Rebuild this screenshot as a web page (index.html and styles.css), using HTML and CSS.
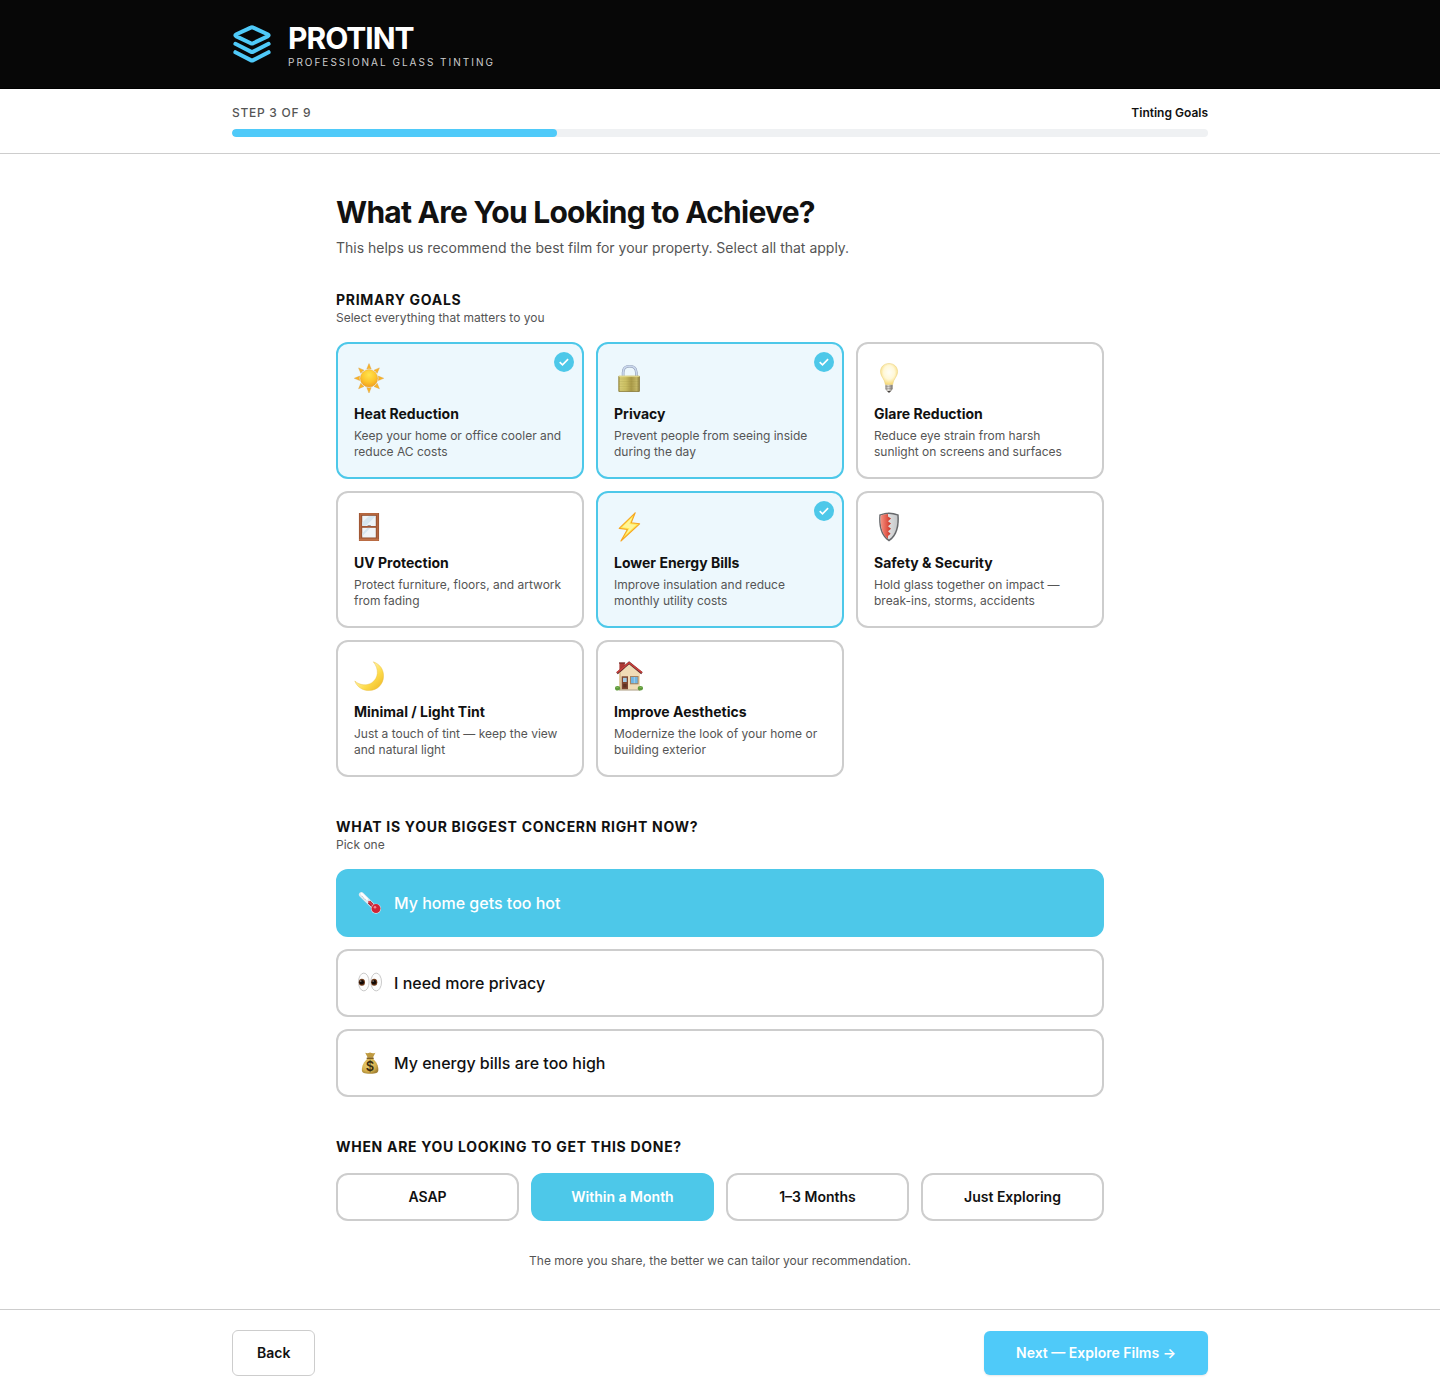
FILE: index.html
```html
<!DOCTYPE html>
<html lang="en">
<head>
    <meta charset="UTF-8">
    <meta name="viewport" content="width=device-width, initial-scale=1.0">
    <title>ProTint - Tinting Goals</title>
    <link rel="stylesheet" href="styles.css">
</head>
<body>
    <header class="site-header">
        <div class="container brand">
            <svg class="brand-icon" viewBox="0 0 40 40" fill="none" stroke="#4fcaf9" stroke-width="4" stroke-linecap="round" stroke-linejoin="round" aria-hidden="true">
                <path d="M18.8 3.6Q20 3 21.2 3.6L35.6 10.2Q37.8 11.3 35.6 12.4L21.2 19.2Q20 19.8 18.8 19.2L4.4 12.4Q2.2 11.3 4.4 10.2Z"/>
                <path d="M3.4 19.8 18.8 27.6Q20 28.2 21.2 27.6L36.6 19.8"/>
                <path d="M3.4 28.2 18.8 36.1Q20 36.7 21.2 36.1L36.6 28.2"/>
            </svg>
            <div>
                <div class="brand-name">PROTINT</div>
                <div class="brand-tag">PROFESSIONAL GLASS TINTING</div>
            </div>
        </div>
    </header>

    <div class="progress">
        <div class="container">
            <div class="progress-labels">
                <span class="progress-step">STEP 3 OF 9</span>
                <span class="progress-title">Tinting Goals</span>
            </div>
            <div class="progress-track">
                <div class="progress-fill" style="width: 33.33%"></div>
            </div>
        </div>
    </div>

    <form>
        <main class="content">
            <h1>What Are You Looking to Achieve?</h1>
            <p class="intro">This helps us recommend the best film for your property. Select all that apply.</p>

            <section class="section">
                <h2>PRIMARY GOALS</h2>
                <p class="hint">Select everything that matters to you</p>
                <div class="goals">
                    <label class="goal">
                        <input type="checkbox" name="goal" value="heat" checked>
                        <svg class="badge" viewBox="0 0 20 20" aria-hidden="true"><circle cx="10" cy="10" r="10"/><path d="M5.7 10.1 8.5 12.8 14.1 7.1"/></svg>
                        <svg class="goal-icon" viewBox="0 0 30 30" aria-hidden="true">
                            <defs>
                                <radialGradient id="sun" cx=".5" cy=".3" r=".75"><stop offset="0" stop-color="#ffe34d"/><stop offset=".55" stop-color="#fdc52c"/><stop offset="1" stop-color="#ee9a1e"/></radialGradient>
                                <path id="ray" d="M15 .6 17.2 6Q15 5.2 12.8 6Z"/>
                            </defs>
                            <g fill="#fbb524" stroke="#d99a3c" stroke-width=".4">
                                <use href="#ray"/>
                                <use href="#ray" transform="rotate(45 15 15.3)"/>
                                <use href="#ray" transform="rotate(90 15 15.3)"/>
                                <use href="#ray" transform="rotate(135 15 15.3)"/>
                                <use href="#ray" transform="rotate(180 15 15.3)"/>
                                <use href="#ray" transform="rotate(225 15 15.3)"/>
                                <use href="#ray" transform="rotate(270 15 15.3)"/>
                                <use href="#ray" transform="rotate(315 15 15.3)"/>
                            </g>
                            <circle cx="15" cy="15.3" r="8.7" fill="url(#sun)" stroke="#e9a032" stroke-width=".4"/>
                        </svg>
                        <span class="goal-title">Heat Reduction</span>
                        <span class="goal-text">Keep your home or office cooler and reduce AC costs</span>
                    </label>
                    <label class="goal">
                        <input type="checkbox" name="goal" value="privacy" checked>
                        <svg class="badge" viewBox="0 0 20 20" aria-hidden="true"><circle cx="10" cy="10" r="10"/><path d="M5.7 10.1 8.5 12.8 14.1 7.1"/></svg>
                        <svg class="goal-icon" viewBox="0 0 30 30" aria-hidden="true">
                            <defs>
                                <linearGradient id="brass" x2="1" y2="0"><stop offset="0" stop-color="#8f8038"/><stop offset=".1" stop-color="#d5cb73"/><stop offset=".35" stop-color="#cbbf62"/><stop offset=".6" stop-color="#aa9a48"/><stop offset=".85" stop-color="#c5b866"/><stop offset="1" stop-color="#85773a"/></linearGradient>
                            </defs>
                            <path d="M9.1 14V9.6C9.1 5.3 11.6 3.2 15.6 3.2S22.3 5.3 22.3 9.6V14" fill="none" stroke="#8593ab" stroke-width="2.6"/>
                            <path d="M9.1 14V9.6C9.1 5.3 11.6 3.2 15.6 3.2S22.3 5.3 22.3 9.6V14" fill="none" stroke="#c9d6ec" stroke-width="1.7"/>
                            <rect x="4.3" y="12.8" width="21.6" height="16" rx="1" fill="url(#brass)"/>
                            <path d="M4.8 13.3H25.4" stroke="#e3da91"/>
                            <path d="M5 16H25M5 18.5H25M5 21H25M5 23.5H25M5 26H25" stroke="#8d8039" stroke-width=".15"/>
                            <path d="M4.8 28.4H25.4" stroke="#85763a" stroke-width=".8"/>
                        </svg>
                        <span class="goal-title">Privacy</span>
                        <span class="goal-text">Prevent people from seeing inside during the day</span>
                    </label>
                    <label class="goal">
                        <input type="checkbox" name="goal" value="glare">
                        <svg class="badge" viewBox="0 0 20 20" aria-hidden="true"><circle cx="10" cy="10" r="10"/><path d="M5.7 10.1 8.5 12.8 14.1 7.1"/></svg>
                        <svg class="goal-icon" viewBox="0 0 30 30" aria-hidden="true">
                            <defs>
                                <radialGradient id="glass" cx=".5" cy=".42" r=".58"><stop offset="0" stop-color="#fffef6"/><stop offset=".55" stop-color="#fff8d8"/><stop offset="1" stop-color="#f7d974"/></radialGradient>
                                <linearGradient id="screw" x2="1" y2="0"><stop offset="0" stop-color="#8a8580"/><stop offset=".4" stop-color="#e2dfda"/><stop offset="1" stop-color="#77726d"/></linearGradient>
                            </defs>
                            <path d="M11.4 21.5H18.6V26L16.5 29H13.5L11.4 26Z" fill="url(#screw)"/>
                            <path d="M11.5 23.7 18.5 23M11.5 25.9 18.5 25.2" stroke="#74706c" stroke-width=".4"/>
                            <path d="M13.4 28H16.6L15.8 29.5H14.2Z" fill="#45413e"/>
                            <path d="M15 .5C9.8 .5 6.5 4.1 6.5 8.7 6.5 13.8 10.7 15.6 11.3 21.6H18.7C19.3 15.6 23.6 13.8 23.6 8.7 23.6 4.1 20.2 .5 15 .5Z" fill="url(#glass)" stroke="#e9cf79" stroke-width=".5"/>
                        </svg>
                        <span class="goal-title">Glare Reduction</span>
                        <span class="goal-text">Reduce eye strain from harsh sunlight on screens and surfaces</span>
                    </label>
                    <label class="goal">
                        <input type="checkbox" name="goal" value="uv">
                        <svg class="badge" viewBox="0 0 20 20" aria-hidden="true"><circle cx="10" cy="10" r="10"/><path d="M5.7 10.1 8.5 12.8 14.1 7.1"/></svg>
                        <svg class="goal-icon" viewBox="0 0 30 30" aria-hidden="true">
                            <rect x="5" y="1" width="20" height="28" fill="#b5673f"/>
                            <path d="M5.4 1V29M24.6 1V29" stroke="#8f4c2d" stroke-width=".6"/>
                            <path d="M7.4 3H22.6V26.2H7.4Z" fill="#8b4a2c"/>
                            <rect x="8.2" y="3.8" width="13.6" height="10.2" fill="#eef4f8"/>
                            <rect x="8.2" y="15.6" width="13.6" height="9.9" fill="#f1f5f8"/>
                            <path d="M8.2 13.8V10.5L15 4H21.8L12 13.8ZM8.2 21.5 13.5 15.8H16.5L8.2 24.2Z" fill="#d5e6f0"/>
                            <path d="M7 14.8H23" stroke="#a75a37" stroke-width="1.4"/>
                            <path d="M13.6 13.5H16.8" stroke="#8b8f92" stroke-width=".9"/>
                            <path d="M5 27.8H25" stroke="#c77a50" stroke-width="1"/>
                        </svg>
                        <span class="goal-title">UV Protection</span>
                        <span class="goal-text">Protect furniture, floors, and artwork from fading</span>
                    </label>
                    <label class="goal">
                        <input type="checkbox" name="goal" value="energy" checked>
                        <svg class="badge" viewBox="0 0 20 20" aria-hidden="true"><circle cx="10" cy="10" r="10"/><path d="M5.7 10.1 8.5 12.8 14.1 7.1"/></svg>
                        <svg class="goal-icon" viewBox="0 0 30 30" aria-hidden="true">
                            <path d="M21.2 .8 5.2 16.4 13.4 17.5 6.9 29 25.6 11.8 17.2 10.8Z" fill="#ffe94f" stroke="#f6a623" stroke-width="1.1" stroke-linejoin="round"/>
                            <path d="M18.3 5.3 8.2 15.3 15.4 16.2 11.3 23.2 22.4 12.8 15.4 12Z" fill="#fff59a"/>
                        </svg>
                        <span class="goal-title">Lower Energy Bills</span>
                        <span class="goal-text">Improve insulation and reduce monthly utility costs</span>
                    </label>
                    <label class="goal">
                        <input type="checkbox" name="goal" value="safety">
                        <svg class="badge" viewBox="0 0 20 20" aria-hidden="true"><circle cx="10" cy="10" r="10"/><path d="M5.7 10.1 8.5 12.8 14.1 7.1"/></svg>
                        <svg class="goal-icon" viewBox="0 0 30 30" aria-hidden="true">
                            <defs>
                                <linearGradient id="steel" x2="1" y2="0"><stop offset="0" stop-color="#f4f4f4"/><stop offset="1" stop-color="#c6c8ca"/></linearGradient>
                                <linearGradient id="red" x2="1" y2="0"><stop offset="0" stop-color="#f39484"/><stop offset=".6" stop-color="#e2594a"/><stop offset="1" stop-color="#bf3327"/></linearGradient>
                            </defs>
                            <path d="M15 .4Q19.5 .6 24.7 2.4C25.6 13.5 23.6 23.8 15 29.4 6.4 23.8 4.4 13.5 5.3 2.4 10.5 .6 15 .4 15 .4Z" fill="#66686b"/>
                            <path d="M15 1.9Q19 2 23.3 3.5C23.9 13.3 22.2 22.3 15 27.5 7.8 22.3 6.1 13.3 6.7 3.5 11 2 15 1.9 15 1.9Z" fill="url(#steel)"/>
                            <path d="M14 2Q10 2.4 6.7 3.5C6.1 13.3 7.8 22.3 14 26.8L14 24 16.6 21.8 14 19.2 17 16.8 14 14.2 17 11.6 14 9.2 17 6.6 14 4.4Z" fill="url(#red)"/>
                        </svg>
                        <span class="goal-title">Safety &amp; Security</span>
                        <span class="goal-text">Hold glass together on impact — break-ins, storms, accidents</span>
                    </label>
                    <label class="goal">
                        <input type="checkbox" name="goal" value="minimal">
                        <svg class="badge" viewBox="0 0 20 20" aria-hidden="true"><circle cx="10" cy="10" r="10"/><path d="M5.7 10.1 8.5 12.8 14.1 7.1"/></svg>
                        <svg class="goal-icon" viewBox="0 0 30 30" aria-hidden="true">
                            <defs>
                                <linearGradient id="moon" x1=".2" y1=".2" x2=".9" y2=".9"><stop offset=".3" stop-color="#ffec8c"/><stop offset=".6" stop-color="#fddb4b"/><stop offset="1" stop-color="#f0bd2c"/></linearGradient>
                            </defs>
                            <path d="M19.3 .8C26.5 3.4 29.7 9 29.6 15.2 29.4 23.3 23.3 29.4 15.2 29.6 8.5 29.6 3 26 .8 20 5.8 24.4 12.6 25 17.8 21.7 24.6 17.4 25.2 7.8 19.3 .8Z" fill="url(#moon)" stroke="#e8bc3e" stroke-width=".4"/>
                        </svg>
                        <span class="goal-title">Minimal / Light Tint</span>
                        <span class="goal-text">Just a touch of tint — keep the view and natural light</span>
                    </label>
                    <label class="goal">
                        <input type="checkbox" name="goal" value="aesthetics">
                        <svg class="badge" viewBox="0 0 20 20" aria-hidden="true"><circle cx="10" cy="10" r="10"/><path d="M5.7 10.1 8.5 12.8 14.1 7.1"/></svg>
                        <svg class="goal-icon" viewBox="0 0 30 30" aria-hidden="true">
                            <rect x="5.4" y="1.8" width="5.4" height="9" fill="#ad3a35"/>
                            <path d="M5 2H11.2" stroke="#6f2a29" stroke-width="1.2"/>
                            <path d="M5.3 12 15 3 26 12V28.8H5.3Z" fill="#f0dcb6"/>
                            <path d="M5.3 12V28.8H7V11Z" fill="#dcc396"/>
                            <path d="M3 12.3 15.1 1.8 27.9 12.3" fill="none" stroke="#5f2b2b" stroke-width="2.4"/>
                            <path d="M3 11.6 15.1 1.7 27.9 11.6" fill="none" stroke="#cc3f3b" stroke-width="1.6"/>
                            <rect x="7.7" y="15.3" width="6.3" height="13" fill="#7d4630"/>
                            <rect x="9" y="16.8" width="3.7" height="4.2" fill="#a4cde6"/>
                            <path d="M9.2 23H12.6V26.5H9.2Z" fill="#5f3322"/>
                            <rect x="16" y="15" width="8.6" height="8.3" fill="#a48360"/>
                            <rect x="17" y="16" width="6.6" height="6.2" fill="#6fb5e3"/>
                            <path d="M20.3 16V22.2" stroke="#d7e9f2" stroke-width=".5"/>
                            <path d="M5 29H26" stroke="#a99a7e"/>
                            <ellipse cx="3.6" cy="27.2" rx="2.6" ry="2.3" fill="#5f9a3c"/>
                            <ellipse cx="26.4" cy="27.2" rx="2.6" ry="2.3" fill="#5f9a3c"/>
                            <path d="M2.4 26.5H4.4M25.6 26.5H27.6" stroke="#8bc05a" stroke-width=".8"/>
                        </svg>
                        <span class="goal-title">Improve Aesthetics</span>
                        <span class="goal-text">Modernize the look of your home or building exterior</span>
                    </label>
                </div>
            </section>

            <section class="section">
                <h2>WHAT IS YOUR BIGGEST CONCERN RIGHT NOW?</h2>
                <p class="hint">Pick one</p>
                <div class="concerns">
                    <label class="option concern">
                        <input type="radio" name="concern" value="hot" checked>
                        <svg class="concern-icon" viewBox="0 0 24 24" aria-hidden="true">
                            <path d="M3.4 3.6 17 17" stroke="#dfeaf0" stroke-width="5" stroke-linecap="round"/>
                            <path d="M4 5.2 8 9.2" stroke="#b7c6cf" stroke-width="1.2" stroke-dasharray="1 1"/>
                            <path d="M3.6 2.8 9 8" stroke="#fff" stroke-width="2" stroke-linecap="round"/>
                            <path d="M11 11 17 17" stroke="#9c2130" stroke-width="3.4"/>
                            <path d="M10.5 10.3 17 16.6" stroke="#e23a48" stroke-width="1.6"/>
                            <circle cx="18" cy="17.8" r="5" fill="#dbe6ec"/>
                            <circle cx="18" cy="17.6" r="4.5" fill="#cf2435"/>
                            <circle cx="17" cy="16.2" r="1.3" fill="#f58790"/>
                        </svg>
                        <span>My home gets too hot</span>
                    </label>
                    <label class="option concern">
                        <input type="radio" name="concern" value="privacy">
                        <svg class="concern-icon" viewBox="0 0 24 24" aria-hidden="true">
                            <ellipse cx="5.8" cy="11" rx="5.3" ry="8.9" fill="#fdfdfd" stroke="#bcbcbc" stroke-width=".8"/>
                            <ellipse cx="18.2" cy="11" rx="5.3" ry="8.9" fill="#fdfdfd" stroke="#bcbcbc" stroke-width=".8"/>
                            <ellipse cx="3.9" cy="11.2" rx="3.1" ry="3.5" fill="#6d3a1a"/>
                            <ellipse cx="16.2" cy="11.2" rx="3.1" ry="3.5" fill="#6d3a1a"/>
                            <circle cx="3.7" cy="11.2" r="2.3" fill="#120a06"/>
                            <circle cx="16" cy="11.2" r="2.3" fill="#120a06"/>
                            <circle cx="2.8" cy="10" r=".6" fill="#fff"/>
                            <circle cx="15.1" cy="10" r=".6" fill="#fff"/>
                        </svg>
                        <span>I need more privacy</span>
                    </label>
                    <label class="option concern">
                        <input type="radio" name="concern" value="bills">
                        <svg class="concern-icon" viewBox="0 0 24 24" aria-hidden="true">
                            <defs>
                                <radialGradient id="bag" cx=".4" cy=".4" r=".65"><stop offset="0" stop-color="#ecd174"/><stop offset=".7" stop-color="#d3ae4c"/><stop offset="1" stop-color="#a38234"/></radialGradient>
                            </defs>
                            <path d="M7.2 1.8Q9.5 2.8 12 1.5 14.8 2.8 17.4 1.7L14.8 6.8H9.8Z" fill="#bf9a40"/>
                            <path d="M9.5 7.5H14.8C18 10.5 20.7 14.5 20.3 19.5 20 22 18.5 22.7 12.2 22.7S4.2 22 3.9 19.5C3.5 14.5 6.4 10.5 9.5 7.5Z" fill="url(#bag)"/>
                            <path d="M9.2 7.2H15.2" stroke="#806022" stroke-width="1.4" stroke-linecap="round"/>
                            <text x="12.1" y="19.8" class="bag-sign">$</text>
                        </svg>
                        <span>My energy bills are too high</span>
                    </label>
                </div>
            </section>

            <section class="section">
                <h2>WHEN ARE YOU LOOKING TO GET THIS DONE?</h2>
                <div class="times">
                    <label class="option time"><input type="radio" name="time" value="asap"><span>ASAP</span></label>
                    <label class="option time"><input type="radio" name="time" value="month" checked><span>Within a Month</span></label>
                    <label class="option time"><input type="radio" name="time" value="quarter"><span>1–3 Months</span></label>
                    <label class="option time"><input type="radio" name="time" value="exploring"><span>Just Exploring</span></label>
                </div>
            </section>

            <p class="note">The more you share, the better we can tailor your recommendation.</p>
        </main>

        <footer class="site-footer">
            <div class="container footer-row">
                <button type="button" class="btn btn-back">Back</button>
                <button type="button" class="btn btn-next">Next — Explore Films →</button>
            </div>
        </footer>
    </form>
</body>
</html>
```

FILE: styles.css
```css
* {
    box-sizing: border-box;
}
body {
    margin: 0;
    background-color: #fff;
    color: #111;
    font-family: Inter, "Liberation Sans", sans-serif;
    font-size: 14px;
    line-height: 20px;
}
h1, h2, p {
    margin: 0;
}
.container {
    max-width: 1024px;
    margin: 0 auto;
    padding: 0 24px;
}

/* header */
.site-header {
    background-color: #070707;
    padding: 20px 0;
    border-bottom: 1px solid #000;
}
.brand {
    display: flex;
    align-items: center;
    gap: 16px;
}
.brand-icon {
    width: 40px;
    height: 40px;
}
.brand-name {
    color: #fff;
    font-size: 30px;
    font-weight: 700;
    line-height: 36px;
    letter-spacing: -1px;
}
.brand-tag {
    color: #cdcdcd;
    font-size: 10px;
    line-height: 12px;
    letter-spacing: 2px;
}

/* progress */
.progress {
    padding: 16px 0;
    border-bottom: 1px solid #cdcdcd;
}
.progress-labels {
    display: flex;
    justify-content: space-between;
    margin-bottom: 8px;
    font-size: 12px;
    line-height: 16px;
}
.progress-step {
    color: #555;
    font-weight: 500;
    letter-spacing: 0.06em;
}
.progress-title {
    font-weight: 600;
}
.progress-track {
    height: 8px;
    border-radius: 4px;
    background-color: #eff1f3;
    overflow: hidden;
}
.progress-fill {
    height: 100%;
    border-radius: 4px;
    background-color: #4fcaf9;
}

/* form */
.content {
    max-width: 816px;
    margin: 0 auto;
    padding: 40px 24px;
}
h1 {
    font-size: 30px;
    font-weight: 700;
    line-height: 36px;
    letter-spacing: -0.025em;
}
.intro {
    margin-top: 8px;
    color: #555;
}
.section {
    margin-top: 40px;
}
.intro + .section {
    margin-top: 32px;
}
h2 {
    font-size: 14px;
    font-weight: 700;
    line-height: 20px;
    letter-spacing: 0.05em;
}
.hint, .note {
    color: #555;
    font-size: 12px;
    line-height: 16px;
}
.note {
    margin-top: 32px;
    text-align: center;
}
.goal input, .option input {
    position: absolute;
    opacity: 0;
}
.goals {
    display: grid;
    grid-template-columns: repeat(3, 1fr);
    gap: 12px;
    margin-top: 16px;
}
.goal {
    position: relative;
    min-height: 137px;
    padding: 16px;
    border: 2px solid #cdcdcd;
    border-radius: 12px;
    cursor: pointer;
}
.goal:has(:checked) {
    border-color: #4dc8e9;
    background-color: #edf8fd;
}
.badge {
    display: none;
    position: absolute;
    top: 8px;
    right: 8px;
    width: 20px;
    height: 20px;
}
.badge circle {
    fill: #4dc8e9;
}
.badge path {
    fill: none;
    stroke: #fff;
    stroke-width: 1.6;
}
.goal:has(:checked) .badge {
    display: block;
}
.goal-icon {
    display: block;
    width: 30px;
    height: 30px;
    margin: 3px 0 11px;
}
.goal-title {
    display: block;
    font-weight: 700;
}
.goal-text {
    display: block;
    margin-top: 4px;
    color: #555;
    font-size: 12px;
    line-height: 16px;
}
.option {
    position: relative;
    display: flex;
    align-items: center;
    border: 2px solid #cdcdcd;
    border-radius: 12px;
    cursor: pointer;
}
.option:has(:checked) {
    border-color: #4dc8e9;
    background-color: #4dc8e9;
    color: #fff;
}
.goal:has(:focus-visible), .option:has(:focus-visible) {
    outline: 2px solid #111;
    outline-offset: 2px;
}
.concerns {
    display: grid;
    gap: 12px;
    margin-top: 16px;
}
.concern {
    gap: 12px;
    padding: 20px;
    font-size: 16px;
    font-weight: 500;
    line-height: 24px;
}
.concern-icon {
    width: 24px;
    height: 24px;
}
.bag-sign {
    fill: #3d2d0e;
    font-size: 13px;
    font-weight: 600;
    text-anchor: middle;
}
.times {
    display: grid;
    grid-template-columns: repeat(4, 1fr);
    gap: 12px;
    margin-top: 16px;
}
.time {
    justify-content: center;
    padding: 12px;
    font-weight: 600;
}

/* footer */
.site-footer {
    padding: 20px 0;
    border-top: 1px solid #cdcdcd;
}
.footer-row {
    display: flex;
    align-items: center;
    justify-content: space-between;
}
.btn {
    border: 0;
    border-radius: 6px;
    font-family: inherit;
    font-size: 14px;
    font-weight: 600;
    line-height: 20px;
    cursor: pointer;
}
.btn-back {
    padding: 12px 24px;
    border: 1px solid #cdcdcd;
    background-color: #fff;
    color: #111;
}
.btn-next {
    padding: 12px 32px;
    background-color: #4fcaf9;
    color: #fff;
    box-shadow: 0 1px 2px rgba(0, 0, 0, 0.1);
}
@media (max-width: 640px) {
    .goals, .times {
        grid-template-columns: repeat(2, 1fr);
    }
}
```
